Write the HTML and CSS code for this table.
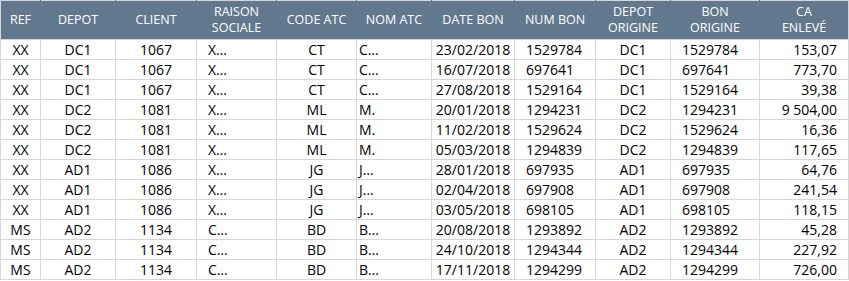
FILE: index.html
```html
<!DOCTYPE html>
<html lang="fr">
<head>
<meta charset="utf-8">
<title>Bons</title>
<link rel="stylesheet" href="styles.css">
</head>
<body>
<table class="grid">
  <colgroup>
    <col class="c-ref"><col class="c-depot"><col class="c-client"><col class="c-raison"><col class="c-code"><col class="c-nom"><col class="c-date"><col class="c-num"><col class="c-dorig"><col class="c-borig"><col class="c-ca">
  </colgroup>
  <thead>
    <tr>
      <th>REF</th><th>DEPOT</th><th>CLIENT</th><th>RAISON<br>SOCIALE</th><th>CODE ATC</th><th>NOM ATC</th><th>DATE BON</th><th>NUM BON</th><th>DEPOT<br>ORIGINE</th><th>BON<br>ORIGINE</th><th>CA<br>ENLEVÉ</th>
    </tr>
  </thead>
  <tbody>
    <tr><td class="ctr">XX</td><td class="ctr">DC1</td><td class="ctr">1067</td><td class="lft">X…</td><td class="ctr">CT</td><td class="nom">C…</td><td class="ctr">23/02/2018</td><td class="lft">1529784</td><td class="ctr">DC1</td><td class="lft">1529784</td><td class="rgt">153,07</td></tr>
    <tr><td class="ctr">XX</td><td class="ctr">DC1</td><td class="ctr">1067</td><td class="lft">X…</td><td class="ctr">CT</td><td class="nom">C…</td><td class="ctr">16/07/2018</td><td class="lft">697641</td><td class="ctr">DC1</td><td class="lft">697641</td><td class="rgt">773,70</td></tr>
    <tr><td class="ctr">XX</td><td class="ctr">DC1</td><td class="ctr">1067</td><td class="lft">X…</td><td class="ctr">CT</td><td class="nom">C…</td><td class="ctr">27/08/2018</td><td class="lft">1529164</td><td class="ctr">DC1</td><td class="lft">1529164</td><td class="rgt">39,38</td></tr>
    <tr><td class="ctr">XX</td><td class="ctr">DC2</td><td class="ctr">1081</td><td class="lft">X…</td><td class="ctr">ML</td><td class="nom">M.</td><td class="ctr">20/01/2018</td><td class="lft">1294231</td><td class="ctr">DC2</td><td class="lft">1294231</td><td class="rgt">9 504,00</td></tr>
    <tr><td class="ctr">XX</td><td class="ctr">DC2</td><td class="ctr">1081</td><td class="lft">X…</td><td class="ctr">ML</td><td class="nom">M.</td><td class="ctr">11/02/2018</td><td class="lft">1529624</td><td class="ctr">DC2</td><td class="lft">1529624</td><td class="rgt">16,36</td></tr>
    <tr><td class="ctr">XX</td><td class="ctr">DC2</td><td class="ctr">1081</td><td class="lft">X…</td><td class="ctr">ML</td><td class="nom">M.</td><td class="ctr">05/03/2018</td><td class="lft">1294839</td><td class="ctr">DC2</td><td class="lft">1294839</td><td class="rgt">117,65</td></tr>
    <tr><td class="ctr">XX</td><td class="ctr">AD1</td><td class="ctr">1086</td><td class="lft">X…</td><td class="ctr">JG</td><td class="nom">J…</td><td class="ctr">28/01/2018</td><td class="lft">697935</td><td class="ctr">AD1</td><td class="lft">697935</td><td class="rgt">64,76</td></tr>
    <tr><td class="ctr">XX</td><td class="ctr">AD1</td><td class="ctr">1086</td><td class="lft">X…</td><td class="ctr">JG</td><td class="nom">J…</td><td class="ctr">02/04/2018</td><td class="lft">697908</td><td class="ctr">AD1</td><td class="lft">697908</td><td class="rgt">241,54</td></tr>
    <tr><td class="ctr">XX</td><td class="ctr">AD1</td><td class="ctr">1086</td><td class="lft">X…</td><td class="ctr">JG</td><td class="nom">J…</td><td class="ctr">03/05/2018</td><td class="lft">698105</td><td class="ctr">AD1</td><td class="lft">698105</td><td class="rgt">118,15</td></tr>
    <tr><td class="ctr">MS</td><td class="ctr">AD2</td><td class="ctr">1134</td><td class="lft">C…</td><td class="ctr">BD</td><td class="nom">B…</td><td class="ctr">20/08/2018</td><td class="lft">1293892</td><td class="ctr">AD2</td><td class="lft">1293892</td><td class="rgt">45,28</td></tr>
    <tr><td class="ctr">MS</td><td class="ctr">AD2</td><td class="ctr">1134</td><td class="lft">C…</td><td class="ctr">BD</td><td class="nom">B…</td><td class="ctr">24/10/2018</td><td class="lft">1294344</td><td class="ctr">AD2</td><td class="lft">1294344</td><td class="rgt">227,92</td></tr>
    <tr><td class="ctr">MS</td><td class="ctr">AD2</td><td class="ctr">1134</td><td class="lft">C…</td><td class="ctr">BD</td><td class="nom">B…</td><td class="ctr">17/11/2018</td><td class="lft">1294299</td><td class="ctr">AD2</td><td class="lft">1294299</td><td class="rgt">726,00</td></tr>
  </tbody>
</table>
</body>
</html>
```
FILE: styles.css
```css
html, body {
  margin: 0;
  padding: 0;
  background: #ffffff;
}

body {
  font-family: "Open Sans", "Noto Sans", "Liberation Sans", sans-serif;
  color: #000000;
}

.grid {
  border-collapse: collapse;
  table-layout: fixed;
  width: 849px;
}

.c-ref { width: 40px; }
.c-depot { width: 75px; }
.c-client { width: 81px; }
.c-raison { width: 80px; }
.c-code { width: 80px; }
.c-nom { width: 75px; }
.c-date { width: 83px; }
.c-num { width: 81px; }
.c-dorig { width: 75px; }
.c-borig { width: 89px; }
.c-ca { width: 89px; }

.grid th {
  background: #62788e;
  color: #ffffff;
  font-weight: normal;
  font-size: 12.5px;
  line-height: 16px;
  height: 38px;
  padding: 0 2px;
  text-align: center;
  vertical-align: middle;
  border: 1px solid #62788e;
  border-top-color: #d6d6d6;
  border-bottom-color: #d6d6d6;
  white-space: nowrap;
}

.grid th:first-child {
  border-left-color: #d6d6d6;
}

.grid th:last-child {
  border-right-color: #d6d6d6;
}

.grid td {
  font-size: 14px;
  line-height: 19px;
  height: 19px;
  padding: 0;
  border: 1px solid #d6d6d6;
  white-space: nowrap;
  overflow: hidden;
  vertical-align: middle;
}

.grid td.ctr { text-align: center; }
.grid td.lft { text-align: left; padding-left: 11px; }
.grid td.nom { text-align: left; padding-left: 2px; }
.grid td.rgt { text-align: right; padding-right: 11px; }
```
